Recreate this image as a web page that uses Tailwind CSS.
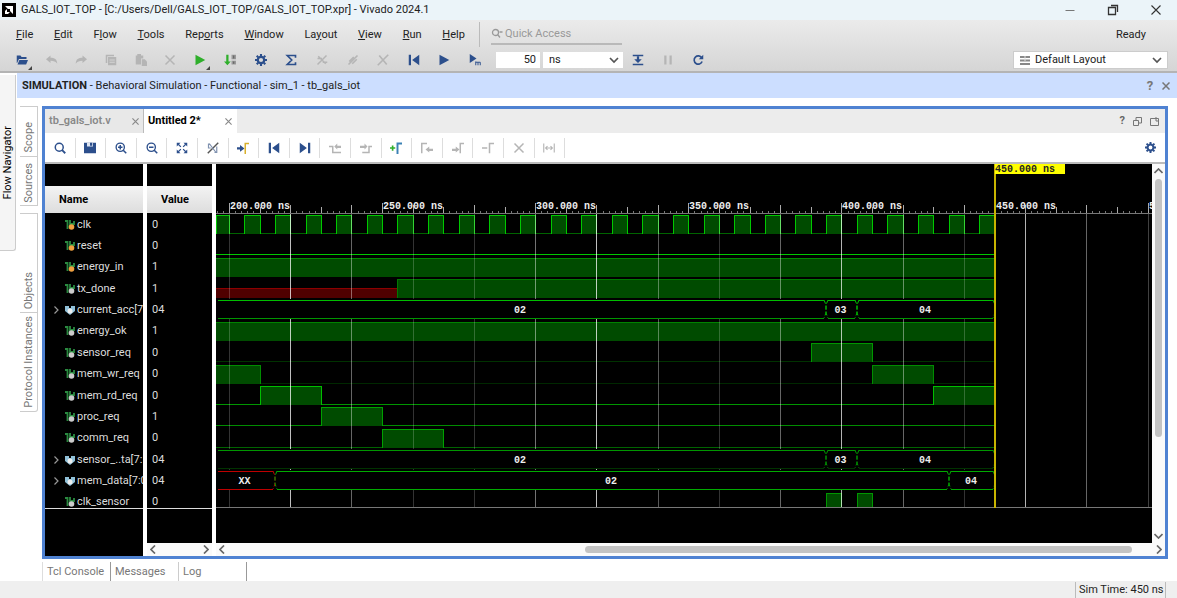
<!DOCTYPE html>
<html lang="en">
<head>
    <meta charset="UTF-8">
    <meta name="viewport" content="width=device-width, initial-scale=1.0">
    <title>GALS_IOT_TOP - Vivado 2024.1</title>
    <script src="https://cdn.jsdelivr.net/npm/@tailwindcss/browser@4"></script>
</head>
<body class="bg-white font-['Roboto','Noto_Sans',sans-serif] text-[11px] leading-4 text-[#222]">
    <div class="h-screen flex flex-col overflow-hidden">
        <!-- Title bar -->
        <header class="h-5 shrink-0 flex items-center bg-[#ebf4f9] pl-[2px]">
            <svg class="w-[14px] h-[14px] shrink-0" viewBox="0 0 14 14"><rect width="14" height="14" fill="#000"/><path d="M3 3h8v8l-3-3V6H6zM3 11V8l2-2v3h3l-2 2z" fill="#fff"/></svg>
            <h1 class="ml-[5px] whitespace-nowrap">GALS_IOT_TOP - [C:/Users/Dell/GALS_IOT_TOP/GALS_IOT_TOP.xpr] - Vivado 2024.1</h1>
            <div class="ml-auto flex">
                <button aria-label="Minimize" class="w-[43px] flex justify-center"><svg class="w-3 h-3" viewBox="0 0 12 12"><path d="M1.500 6.500h9" stroke="#777" fill="none"/></svg></button>
                <button aria-label="Restore" class="w-[43px] flex justify-center"><svg class="w-3 h-3" viewBox="0 0 12 12"><path d="M1.500 3.500h7v7h-7zM4 1.500h6.500V8" stroke="#333" stroke-width="1.300" fill="none"/></svg></button>
                <button aria-label="Close" class="w-[43px] flex justify-center"><svg class="w-3 h-3" viewBox="0 0 12 12"><path d="M1.500 1.500l9 9m0-9l-9 9" stroke="#333" stroke-width="1.100" fill="none"/></svg></button>
            </div>
        </header>

        <!-- Menu and main toolbar -->
        <div class="h-[53px] shrink-0 bg-linear-to-b from-[#ebebeb] to-[#d5d5d5] border-b-2 border-[#b4b4b4]">
            <div class="h-[29px] flex items-center">
                <nav class="ml-[16px] w-[449px] flex justify-between">
                    <button><u>F</u>ile</button>
                    <button><u>E</u>dit</button>
                    <button>F<u>l</u>ow</button>
                    <button><u>T</u>ools</button>
                    <button>Rep<u>o</u>rts</button>
                    <button><u>W</u>indow</button>
                    <button>La<u>y</u>out</button>
                    <button><u>V</u>iew</button>
                    <button><u>R</u>un</button>
                    <button><u>H</u>elp</button>
                </nav>
                <div class="ml-[14px] w-px h-[25px] bg-[#bbb]"></div>
                <label class="ml-[11px] w-[131px] h-5 flex items-center gap-[2px] border-b-2 border-[#b9b9b9]">
                    <svg class="w-3 h-3 shrink-0" viewBox="0 0 12 12"><circle cx="4.500" cy="4.500" r="3" stroke="#999" stroke-width="1.300" fill="none"/><path d="M7 7l2 2.500M8.500 4h3" stroke="#999" stroke-width="1.300"/></svg>
                    <input aria-label="Quick Access" placeholder="Quick Access" class="w-full min-w-0 placeholder:text-[#999] outline-none">
                </label>
                <span class="ml-auto mr-[31px]">Ready</span>
            </div>
            <div class="h-[22px] flex items-center">
                <div class="ml-[7px] w-[208px] flex" id="fileTools"></div>
                <div class="w-[275px] flex" id="runTools"></div>
                <input aria-label="Run time" value="50" class="ml-[6px] w-[44px] h-4 bg-white text-right pr-1">
                <div class="relative ml-[3px]">
                    <select aria-label="Time unit" class="appearance-none block w-[80px] h-4 bg-white pl-[6px] leading-4"><option>ns</option></select>
                    <svg class="absolute right-1 top-1 w-[10px] h-2 pointer-events-none" viewBox="0 0 10 8"><path d="M1 2l4 4 4-4" stroke="#555" stroke-width="1.700" fill="none"/></svg>
                </div>
                <div class="w-[90px] flex" id="stepTools"></div>
                <div class="relative ml-auto mr-[9px]">
                    <svg class="absolute left-[7px] top-[5px] w-[10px] h-[9px]" viewBox="0 0 10 9"><path d="M0 1h10M0 4.500h10M0 8h10" stroke="#888" stroke-width="1.800"/><path d="M5 0v5" stroke="#ddd"/></svg>
                    <select aria-label="Layout" class="appearance-none block w-[155px] h-[18px] bg-white border border-[#ccc] pl-[21px] leading-4"><option>Default Layout</option></select>
                    <svg class="absolute right-[6px] top-[5px] w-[10px] h-2 pointer-events-none" viewBox="0 0 10 8"><path d="M1 2l4 4 4-4" stroke="#555" stroke-width="1.700" fill="none"/></svg>
                </div>
            </div>
        </div>

        <!-- Workspace -->
        <div class="flex-1 min-h-0 flex">
            <aside class="w-[17px] shrink-0 pt-[2px]">
                <button class="w-4 h-[176px] bg-[#f5f5f5] border-r border-b border-[#ccc] rounded-br-[3px] flex items-center justify-center text-black pr-[-1px]"><span class="[writing-mode:vertical-rl] rotate-180">Flow Navigator</span></button>
            </aside>
            <div class="flex-1 min-w-0 flex flex-col">
                <div class="h-[25px] shrink-0 bg-[#ccdeff] flex items-center pl-[5px] pr-[3px]">
                    <h2><b>SIMULATION</b> - Behavioral Simulation - Functional - sim_1 - tb_gals_iot</h2>
                    <button aria-label="Help" class="ml-auto w-4 font-bold text-[13px] text-[#777]">?</button>
                    <button aria-label="Close simulation" class="w-4 flex justify-center"><svg class="w-2 h-2" viewBox="0 0 8 8"><path d="M.5.5l7 7m0-7l-7 7" stroke="#777" stroke-width="1.500"/></svg></button>
                </div>

                <div class="flex-1 min-h-0 flex pt-2">
                    <!-- Side tabs -->
                    <div class="w-[25px] shrink-0 pl-[3px] pr-1 text-[#777]">
                        <button class="w-full h-[50px] border-t border-r border-[#ccc] flex items-center justify-center pt-3"><span class="[writing-mode:vertical-rl] rotate-180">Scope</span></button>
                        <button class="w-full h-[50px] border-y border-r border-[#ccc] flex items-center justify-center pt-1"><span class="[writing-mode:vertical-rl] rotate-180">Sources</span></button>
                        <button class="mt-[7px] w-full h-[99px] border-t border-r border-[#ccc] flex items-end justify-center pb-[3px]"><span class="[writing-mode:vertical-rl] rotate-180">Objects</span></button>
                        <button class="w-full h-[100px] border-y border-r border-[#ccc] rounded-br-[3px] flex items-end justify-center pb-[3px]"><span class="[writing-mode:vertical-rl] rotate-180">Protocol Instances</span></button>
                    </div>

                    <div class="flex-1 min-w-0 flex flex-col mr-[9px]">
                        <!-- Wave window -->
                        <section class="flex-1 min-h-0 flex flex-col border-[3px] border-[#4f82d2]">
                            <div class="h-6 shrink-0 flex bg-[#ececec]">
                                <div class="w-[99px] flex items-center border-r border-[#bbb] bg-[#e8e8e8] pl-1 text-[#888]"><button class="font-semibold">tb_gals_iot.v</button><button aria-label="Close tb_gals_iot.v" class="ml-auto mr-1"><svg class="w-[7px] h-[7px]" viewBox="0 0 8 8"><path d="M.5.5l7 7m0-7l-7 7" stroke="#888" stroke-width="1.300"/></svg></button></div>
                                <div class="w-[93px] flex items-center bg-white pl-1"><button class="font-bold text-black">Untitled 2*</button><button aria-label="Close Untitled 2" class="ml-auto mr-[5px]"><svg class="w-[7px] h-[7px]" viewBox="0 0 8 8"><path d="M.5.5l7 7m0-7l-7 7" stroke="#888" stroke-width="1.300"/></svg></button></div>
                                <div class="ml-auto mr-[6px] flex items-center gap-2 text-[#666]">
                                    <button aria-label="Wave help" class="font-bold">?</button>
                                    <button aria-label="Float"><svg class="w-[9px] h-[9px]" viewBox="0 0 9 9"><path d="M.5 3.500h5v5h-5zM3 3V.5h5.500V6H6" stroke="#777" fill="none"/></svg></button>
                                    <button aria-label="Maximize"><svg class="w-[9px] h-[9px]" viewBox="0 0 9 9"><path d="M.5 1.500h8v7h-8zM6 0v4h3" stroke="#777" fill="none"/></svg></button>
                                </div>
                            </div>
                            <div class="h-[31px] shrink-0 flex items-center border-b-2 border-[#bbb]">
                                <div class="w-[520px] flex" id="waveTools"></div>
                                <button aria-label="Settings" class="ml-auto mr-[9px]"><svg class="w-[11px] h-[11px]" viewBox="0 0 16 16"><use href="#gear"/></svg></button>
                            </div>

                            <div class="flex-1 min-h-0 flex">
                                <div class="w-[98px] shrink-0 bg-black pt-[22px]">
                                    <div class="h-[27px] bg-linear-to-b from-[#f3f3f3] to-[#ddd] flex items-center pl-[14px] font-bold text-black">Name</div>
                                    <div class="h-[296px] overflow-hidden border-b border-[#ddd]"><ul class="h-[300px] flex flex-col pt-px" id="names"></ul></div>
                                </div>
                                <div class="ml-[4px] w-[65px] shrink-0 flex flex-col">
                                    <div class="flex-1 bg-black pt-[22px]">
                                        <div class="h-[27px] bg-linear-to-b from-[#f3f3f3] to-[#ddd] flex items-center pl-[14px] font-bold text-black">Value</div>
                                        <div class="h-[296px] overflow-hidden border-b border-[#ddd]"><ul class="h-[300px] flex flex-col pt-px" id="values"></ul></div>
                                    </div>
                                    <div class="h-[13px] bg-[#fafafa] flex items-center justify-between px-[3px]">
                                        <svg class="w-[6px] h-[9px]" viewBox="0 0 6 9"><path d="M5 .5l-4 4 4 4" stroke="#666" stroke-width="1.700" fill="none"/></svg>
                                        <svg class="w-[6px] h-[9px]" viewBox="0 0 6 9"><path d="M1 .5l4 4-4 4" stroke="#666" stroke-width="1.700" fill="none"/></svg>
                                    </div>
                                </div>
                                <div class="ml-[4px] flex-1 min-w-0 flex flex-col">
                                    <div class="flex-1 min-h-0 flex">
                                        <svg class="flex-1 min-w-0 h-full bg-black" id="wave" shape-rendering="crispEdges"></svg>
                                        <div class="w-[13px] bg-[#fafafa] flex flex-col items-center py-1">
                                            <svg class="w-[9px] h-[6px]" viewBox="0 0 9 6"><path d="M.5 5l4-4 4 4" stroke="#666" stroke-width="1.700" fill="none"/></svg>
                                            <div class="flex-1 w-[7px] pt-[5px]"><div class="h-[73%] rounded bg-[#c3c3c3]"></div></div>
                                            <svg class="w-[9px] h-[6px]" viewBox="0 0 9 6"><path d="M.5 1l4 4 4-4" stroke="#666" stroke-width="1.700" fill="none"/></svg>
                                        </div>
                                    </div>
                                    <div class="h-[13px] bg-[#fafafa] flex items-center pl-[3px] pr-[3px]">
                                        <svg class="w-[6px] h-[9px]" viewBox="0 0 6 9"><path d="M5 .5l-4 4 4 4" stroke="#666" stroke-width="1.700" fill="none"/></svg>
                                        <div class="flex-1 pl-[360px] pr-[24px]"><div class="h-[7px] rounded bg-[#c3c3c3]"></div></div>
                                        <svg class="w-[6px] h-[9px]" viewBox="0 0 6 9"><path d="M1 .5l4 4-4 4" stroke="#666" stroke-width="1.700" fill="none"/></svg>
                                    </div>
                                </div>
                            </div>
                        </section>

                        <!-- Bottom tabs -->
                        <div class="h-[22px] shrink-0 pt-[3px] flex text-[#777]">
                            <button class="w-[69px] text-left pl-1 border-l border-r border-l-[#ddd] border-r-[#999]">Tcl Console</button>
                            <button class="w-[68px] text-left pl-1 border-r border-[#ccc]">Messages</button>
                            <button class="w-[68px] text-left pl-1 border-r border-[#999]">Log</button>
                        </div>
                    </div>
                </div>
            </div>
        </div>

        <footer class="h-[17px] shrink-0 bg-[#efefef] flex justify-end pt-px pr-[11px]">
            <div class="w-[91px] border-x border-[#bbb] pl-[3px] whitespace-nowrap">Sim Time: 450 ns</div>
        </footer>
    </div>

    <!-- Icon shapes, 16x16 -->
    <svg class="hidden">
        <symbol id="gear" viewBox="0 0 16 16"><circle cx="8" cy="8" r="4.300" fill="none" stroke="#2c4f8c" stroke-width="3"/><path d="M8 0v3M8 13v3M0 8h3M13 8h3M2.300 2.300l2 2M11.700 11.700l2 2M2.300 13.700l2-2M11.700 4.300l2-2" stroke="#2c4f8c" stroke-width="2.800"/></symbol>
    </svg>

    <script>
        const blue = '#2c4f8c', gray = '#b5b5b5';
        const icons = {
            open: `<path d="M1 2h5l1.500 2H14v2.500H4L1.500 12H1z" fill="${blue}"/><path d="M4.500 8H16l-2.500 6H2z" fill="${blue}"/>`,
            undo: `<path d="M0 7l6-5v3c5 0 9 2 9 8-2-3-5-4-9-4v3z" fill="${gray}"/>`,
            redo: `<path d="M16 7l-6-5v3c-5 0-9 2-9 8 2-3 5-4 9-4v3z" fill="${gray}"/>`,
            copy: `<path d="M1 1h11v2H3v9H1z" fill="${gray}"/><path d="M4 4h11v11H4z" fill="${gray}"/><path d="M6 8h7M6 11h7" stroke="#ddd"/>`,
            paste: `<path d="M1 2h2V0h5v2h3v4H8v8H1z" fill="${gray}"/><path d="M9 7h4l3 3v6H9z" fill="${gray}"/>`,
            del: `<path d="M2 2l12 12M14 2L2 14" stroke="${gray}" stroke-width="2"/>`,
            run: `<path d="M2 1l13 7-13 7z" fill="#2faf2b"/>`,
            compile: `<path d="M3 1v9H0l4.500 5L9 10H6V1z" fill="#2faf2b"/><path d="M10 1h6v6h-6zM10 9h6v5h-6z" fill="#999"/><path d="M13 2v4M13 10v3" stroke="#444"/>`,
            gear: `<use href="#gear"/>`,
            sigma: `<path d="M14 5V2H3l6 6-6 6h11v-3" fill="none" stroke="${blue}" stroke-width="2.200"/>`,
            noReport: `<path d="M3 3l10 10M14 2L2 14M2 6h6M9 11h6" stroke="${gray}" stroke-width="2"/>`,
            noLink: `<path d="M2 14L14 2M3 10l6-6M7 13l6-6" stroke="${gray}" stroke-width="2.200"/>`,
            noCut: `<path d="M3 2l10 12M15 1L1 15" stroke="${gray}" stroke-width="2.200"/>`,
            first: `<path d="M1 1h3v14H1zM15 1v14L5.500 8z" fill="${blue}"/>`,
            last: `<path d="M12 1h3v14h-3zM1 1v14l9.500-7z" fill="${blue}"/>`,
            play: `<path d="M2 1L15 8 2 15z" fill="${blue}"/>`,
            playFor: `<path d="M1 0l9 6-9 6z" fill="${blue}"/><path d="M9 15v-5M9 11h3v4M12 11h3v4" fill="none" stroke="${blue}" stroke-width="1.300"/>`,
            step: `<path d="M1 2h14M1 14h14" stroke="${blue}" stroke-width="2"/><path d="M6.500 3h3v4H13l-5 5-5-5h3.500z" fill="${blue}"/>`,
            pause: `<path d="M3 2h3v12H3zM10 2h3v12h-3z" fill="${gray}"/>`,
            reload: `<path d="M13 5a5.500 5.500 0 1 0 .5 5" fill="none" stroke="${blue}" stroke-width="2.200"/><path d="M15 1v6H9z" fill="${blue}"/>`,
            search: `<circle cx="7" cy="7" r="5.300" fill="none" stroke="${blue}" stroke-width="2"/><path d="M10.500 10.500L15 15" stroke="${blue}" stroke-width="2.400"/>`,
            save: `<path d="M0 1h16v14H0z" fill="${blue}"/><path d="M4 1h8v5H4z" fill="#dfe6f2"/><path d="M8 1h3v4H8z" fill="${blue}"/>`,
            zoomIn: `<circle cx="7" cy="7" r="5.500" fill="none" stroke="${blue}" stroke-width="1.800"/><path d="M11 11l4 4M4 7h6M7 4v6" stroke="${blue}" stroke-width="2"/>`,
            zoomOut: `<circle cx="7" cy="7" r="5.500" fill="none" stroke="${blue}" stroke-width="1.800"/><path d="M11 11l4 4M4 7h6" stroke="${blue}" stroke-width="2"/>`,
            fit: `<path d="M1 1h5L1 6zM15 1v5l-5-5zM1 15v-5l5 5zM15 15h-5l5-5z" fill="${blue}"/><path d="M3 3l3.500 3.500M13 3L9.500 6.500M3 13l3.500-3.500M13 13L9.500 9.500" stroke="${blue}" stroke-width="1.600"/>`,
            noSnap: `<path d="M1 15L15 1" stroke="#555" stroke-width="2"/><path d="M2 2v6h3M10 14h3V6M3 2l9 12" fill="none" stroke="#8092b0" stroke-width="1.600"/>`,
            toCursor: `<path d="M0 7h4V4l6 4.500L4 13v-3H0z" fill="${blue}"/><path d="M11 16V2h5" fill="none" stroke="#d8b02c" stroke-width="2"/>`,
            prevEdge: `<path d="M0 6h5v8h11" fill="none" stroke="${gray}" stroke-width="2"/><path d="M7 6l4-4v3h5v3h-5v2z" fill="${gray}"/>`,
            nextEdge: `<path d="M16 6h-4v8H3" fill="none" stroke="${gray}" stroke-width="2"/><path d="M10 6L6 2v3H0v3h6v2z" fill="${gray}"/>`,
            addMark: `<path d="M0 8h7M3.500 4.500v7" stroke="#2faf2b" stroke-width="2.200"/><path d="M10 16V2h6" fill="none" stroke="#3b82b5" stroke-width="2.600"/>`,
            prevMark: `<path d="M1 15V2h7" fill="none" stroke="${gray}" stroke-width="2"/><path d="M6 10l5-4v3h5v3h-5v2z" fill="${gray}"/>`,
            nextMark: `<path d="M11 15V2h5" fill="none" stroke="${gray}" stroke-width="2"/><path d="M10 10L5 6v3H0v3h5v2z" fill="${gray}"/>`,
            delMark: `<path d="M0 8h7M10 15V2h6" fill="none" stroke="${gray}" stroke-width="2"/>`,
            measure: `<path d="M1 2v12M15 2v12M4 8h8M6 5.500L3.500 8 6 10.500M10 5.500L12.500 8 10 10.500" fill="none" stroke="${gray}" stroke-width="1.500"/>`
        };

        function fillTools(id, list, cell) {
            document.getElementById(id).innerHTML = list.map(name => `
                <button aria-label="${name}" class="${cell}">
                    <svg class="w-3 h-3" viewBox="0 0 16 16">${icons[name]}</svg>
                    ${name === 'open' || name === 'run' ? '<svg class="absolute right-[5px] -bottom-1 w-1 h-1" viewBox="0 0 4 4"><path d="M4 0v4H0z" fill="#444"/></svg>' : ''}
                </button>`).join('');
        }
        const plainCell = 'relative flex-1 flex justify-center';
        fillTools('fileTools', ['open', 'undo', 'redo', 'copy', 'paste', 'del', 'run'], plainCell);
        fillTools('runTools', ['compile', 'gear', 'sigma', 'noReport', 'noLink', 'noCut', 'first', 'play', 'playFor'], plainCell);
        fillTools('stepTools', ['step', 'pause', 'reload'], plainCell);
        fillTools('waveTools', ['search', 'save', 'zoomIn', 'zoomOut', 'fit', 'noSnap', 'toCursor', 'first', 'last', 'prevEdge', 'nextEdge',
            'addMark', 'prevMark', 'nextMark', 'delMark', 'del', 'measure'], 'flex-1 h-5 flex items-center justify-center border-r border-[#ddd]');

        // hi: [from, to] spans in ns where the signal is 1; bus: [from, to, label]
        const clkHigh = [];
        for (let t = 195; t < 450; t += 10) clkHigh.push([t, t + 5]);
        const signals = [
            { name: 'clk', value: '0', kind: 'in', hi: clkHigh, line: '#00c800', low: '#006400' },
            { name: 'reset', value: '0', kind: 'in', hi: [], line: '#00b400', low: '#00c800' },
            { name: 'energy_in', value: '1', kind: 'in', hi: [[190, 450]], line: '#008c00', low: '#003c00' },
            { name: 'tx_done', value: '1', kind: 'sig', hi: [[255, 450]], unknown: [190, 255], line: '#007800', low: '#003c00' },
            { name: 'current_acc[7:', value: '04', kind: 'bus', bus: [[190, 395, '02'], [395, 405, '03'], [405, 450, '04']], line: '#00be00', low: '#009600' },
            { name: 'energy_ok', value: '1', kind: 'sig', hi: [[190, 450]], line: '#008200', low: '#003c00' },
            { name: 'sensor_req', value: '0', kind: 'sig', hi: [[390, 410]], line: '#009600', low: '#003200' },
            { name: 'mem_wr_req', value: '0', kind: 'sig', hi: [[190, 210], [410, 430]], line: '#008c00', low: '#002800' },
            { name: 'mem_rd_req', value: '0', kind: 'sig', hi: [[210, 230], [430, 450]], line: '#00be00', low: '#009600' },
            { name: 'proc_req', value: '1', kind: 'sig', hi: [[230, 250]], line: '#00a000', low: '#008c00' },
            { name: 'comm_req', value: '0', kind: 'sig', hi: [[250, 270]], line: '#00a000', low: '#006400' },
            { name: 'sensor_..ta[7:', value: '04', kind: 'bus', bus: [[190, 395, '02'], [395, 405, '03'], [405, 450, '04']], line: '#009600', low: '#003200' },
            { name: 'mem_data[7:0', value: '04', kind: 'bus', bus: [[190, 215, 'XX'], [215, 435, '02'], [435, 450, '04']], line: '#00aa00' },
            { name: 'clk_sensor', value: '0', kind: 'sig', hi: [[395, 400], [405, 410]], line: '#009600', low: '#003200' }
        ];

        const kindIcon = {
            in: '<path d="M0 1h2.500v8M5 0v4h4V1" stroke="#2a8a40" stroke-width="1.800" fill="none"/><circle cx="6.500" cy="7" r="2.800" fill="#f0a040"/>',
            sig: '<path d="M0 1h2.500v8M5 0v4h4V1" stroke="#2a8a40" stroke-width="1.800" fill="none"/><circle cx="6.500" cy="7" r="2.800" fill="#ccc"/>',
            bus: '<path d="M0 1h4v2h2V1h4v5L5 10 0 6z" fill="#8fc0d8"/><circle cx="5" cy="6" r="2.500" fill="#eee"/>'
        };
        document.getElementById('names').innerHTML = signals.map(s => `
            <li class="flex-1 min-h-0 flex items-center whitespace-nowrap overflow-hidden text-[#ddd]">
                <span class="w-5 shrink-0 flex justify-center pl-[2px]">${s.kind === 'bus' ? '<svg class="w-[5px] h-2" viewBox="0 0 5 8"><path d="M.5.5L4 4 .5 7.500" stroke="#999" stroke-width="1.200" fill="none"/></svg>' : ''}</span>
                <svg class="w-[10px] h-[10px] shrink-0 mr-[2px]" viewBox="0 0 10 10">${kindIcon[s.kind]}</svg>${s.name}
            </li>`).join('');
        document.getElementById('values').innerHTML = signals.map(s =>
            `<li class="flex-1 min-h-0 flex items-center pl-[5px] text-[#ddd]">${s.value}</li>`).join('');

        // Waveform
        const x = t => Math.round(13 + (t - 200) * 3.062);
        const rowTop = 50, pitch = 21.36, end = x(450), bottom = 344;
        const rect = (x1, y1, w, h, fill) => `<rect x="${x1}" y="${y1}" width="${w}" height="${h}" fill="${fill}"/>`;
        const label = (tx, ty, text, fill, anchor = 'start') =>
            `<text x="${tx}" y="${ty}" fill="${fill}" text-anchor="${anchor}" class="font-['Liberation_Mono',monospace] font-bold text-[10px]">${text}</text>`;
        let out = '';

        signals.forEach((s, i) => {
            const top = Math.round(rowTop + i * pitch) + 1, low = top + 18;
            if (s.bus) {
                s.bus.forEach(([a, b, text]) => {
                    const x1 = Math.max(x(a), 0), x2 = x(b), color = text === 'XX' ? '#be0000' : s.line;
                    out += rect(x1 + 2, top, x2 - x1 - 4, 1, color) + rect(x1 + 2, low, x2 - x1 - 4, 1, s.low || color);
                    out += `<path d="M${x2 - 2} ${top}l2 5v8l-2 5${a > 190 ? `M${x1 + 2} ${top}l-2 5v8l2 5` : ''}" stroke="${color}" stroke-dasharray="4 2" fill="none" shape-rendering="auto"/>`;
                });
                return;
            }
            out += rect(0, low, end, 1, s.low);
            if (s.unknown) out += rect(0, top + 9, x(255), 10, '#500000') + rect(0, top + 9, x(255), 1, '#8c0000');
            s.hi.forEach(([a, b]) => {
                const x1 = Math.max(x(a), 0), w = x(b) - x1;
                out += rect(x1, top, w, 19, '#004b00') + rect(x1, top, w, 1, s.line);
                if (a > 190) out += rect(x1, top, 1, 19, s.line);
                if (b < 450) out += rect(x1 + w, top, 1, 19, s.line);
            });
        });

        // Grid every 20 ns, ticks every 2 ns, labels every 50 ns
        const bright = { 200: .2, 220: .75, 240: .4, 260: .2, 280: .2, 300: .45, 320: .75, 340: .35, 360: .2, 380: .4, 400: .7, 420: .4, 440: .2, 460: .7, 480: .4, 500: .25 };
        const busRows = signals.map((s, i) => s.bus ? Math.round(rowTop + i * pitch) : 0).filter(Boolean);
        for (let t = 196; t <= 504; t += 2) {
            const h = t % 20 === 0 ? 8 : t % 10 === 0 ? 6 : 2;
            out += rect(x(t), 49 - h, 1, h, t % 10 === 0 ? '#aaa' : '#777');
            if (t % 20 !== 0) continue;
            // buses hide the grid behind them
            let y = 50;
            if (t < 450) busRows.forEach(by => {
                out += `<rect x="${x(t)}" y="${y}" width="1" height="${Math.max(by - y, 0)}" fill="#fff" opacity="${bright[t]}"/>`;
                y = by + 20;
            });
            out += `<rect x="${x(t)}" y="${y}" width="1" height="${bottom - y}" fill="#fff" opacity="${bright[t]}"/>`;
        }
        out += rect(0, 49, '100%', 1, '#777');
        for (let t = 200; t <= 500; t += 50) out += rect(x(t), 39, 1, 10, '#aaa') + label(x(t) + 1, 45, t + '.000 ns', '#eee');
        signals.forEach((s, i) => s.bus && s.bus.forEach(([a, b, text]) =>
            out += label((Math.max(x(a), 0) + x(b)) / 2 - 1, Math.round(rowTop + i * pitch) + 14, text, '#eee', 'middle')));

        // everything under the last signal row stays black
        out += rect(0, bottom, '100%', 60, '#000') + rect(0, 343, '100%', 1, '#777');
        out += rect(end - 1, 0, 2, 344, '#c8b400') + rect(end, 0, 70, 10, '#ff0') + label(end, 8, '450.000 ns', '#222');
        document.getElementById('wave').innerHTML = out;
    </script>
</body>
</html>
